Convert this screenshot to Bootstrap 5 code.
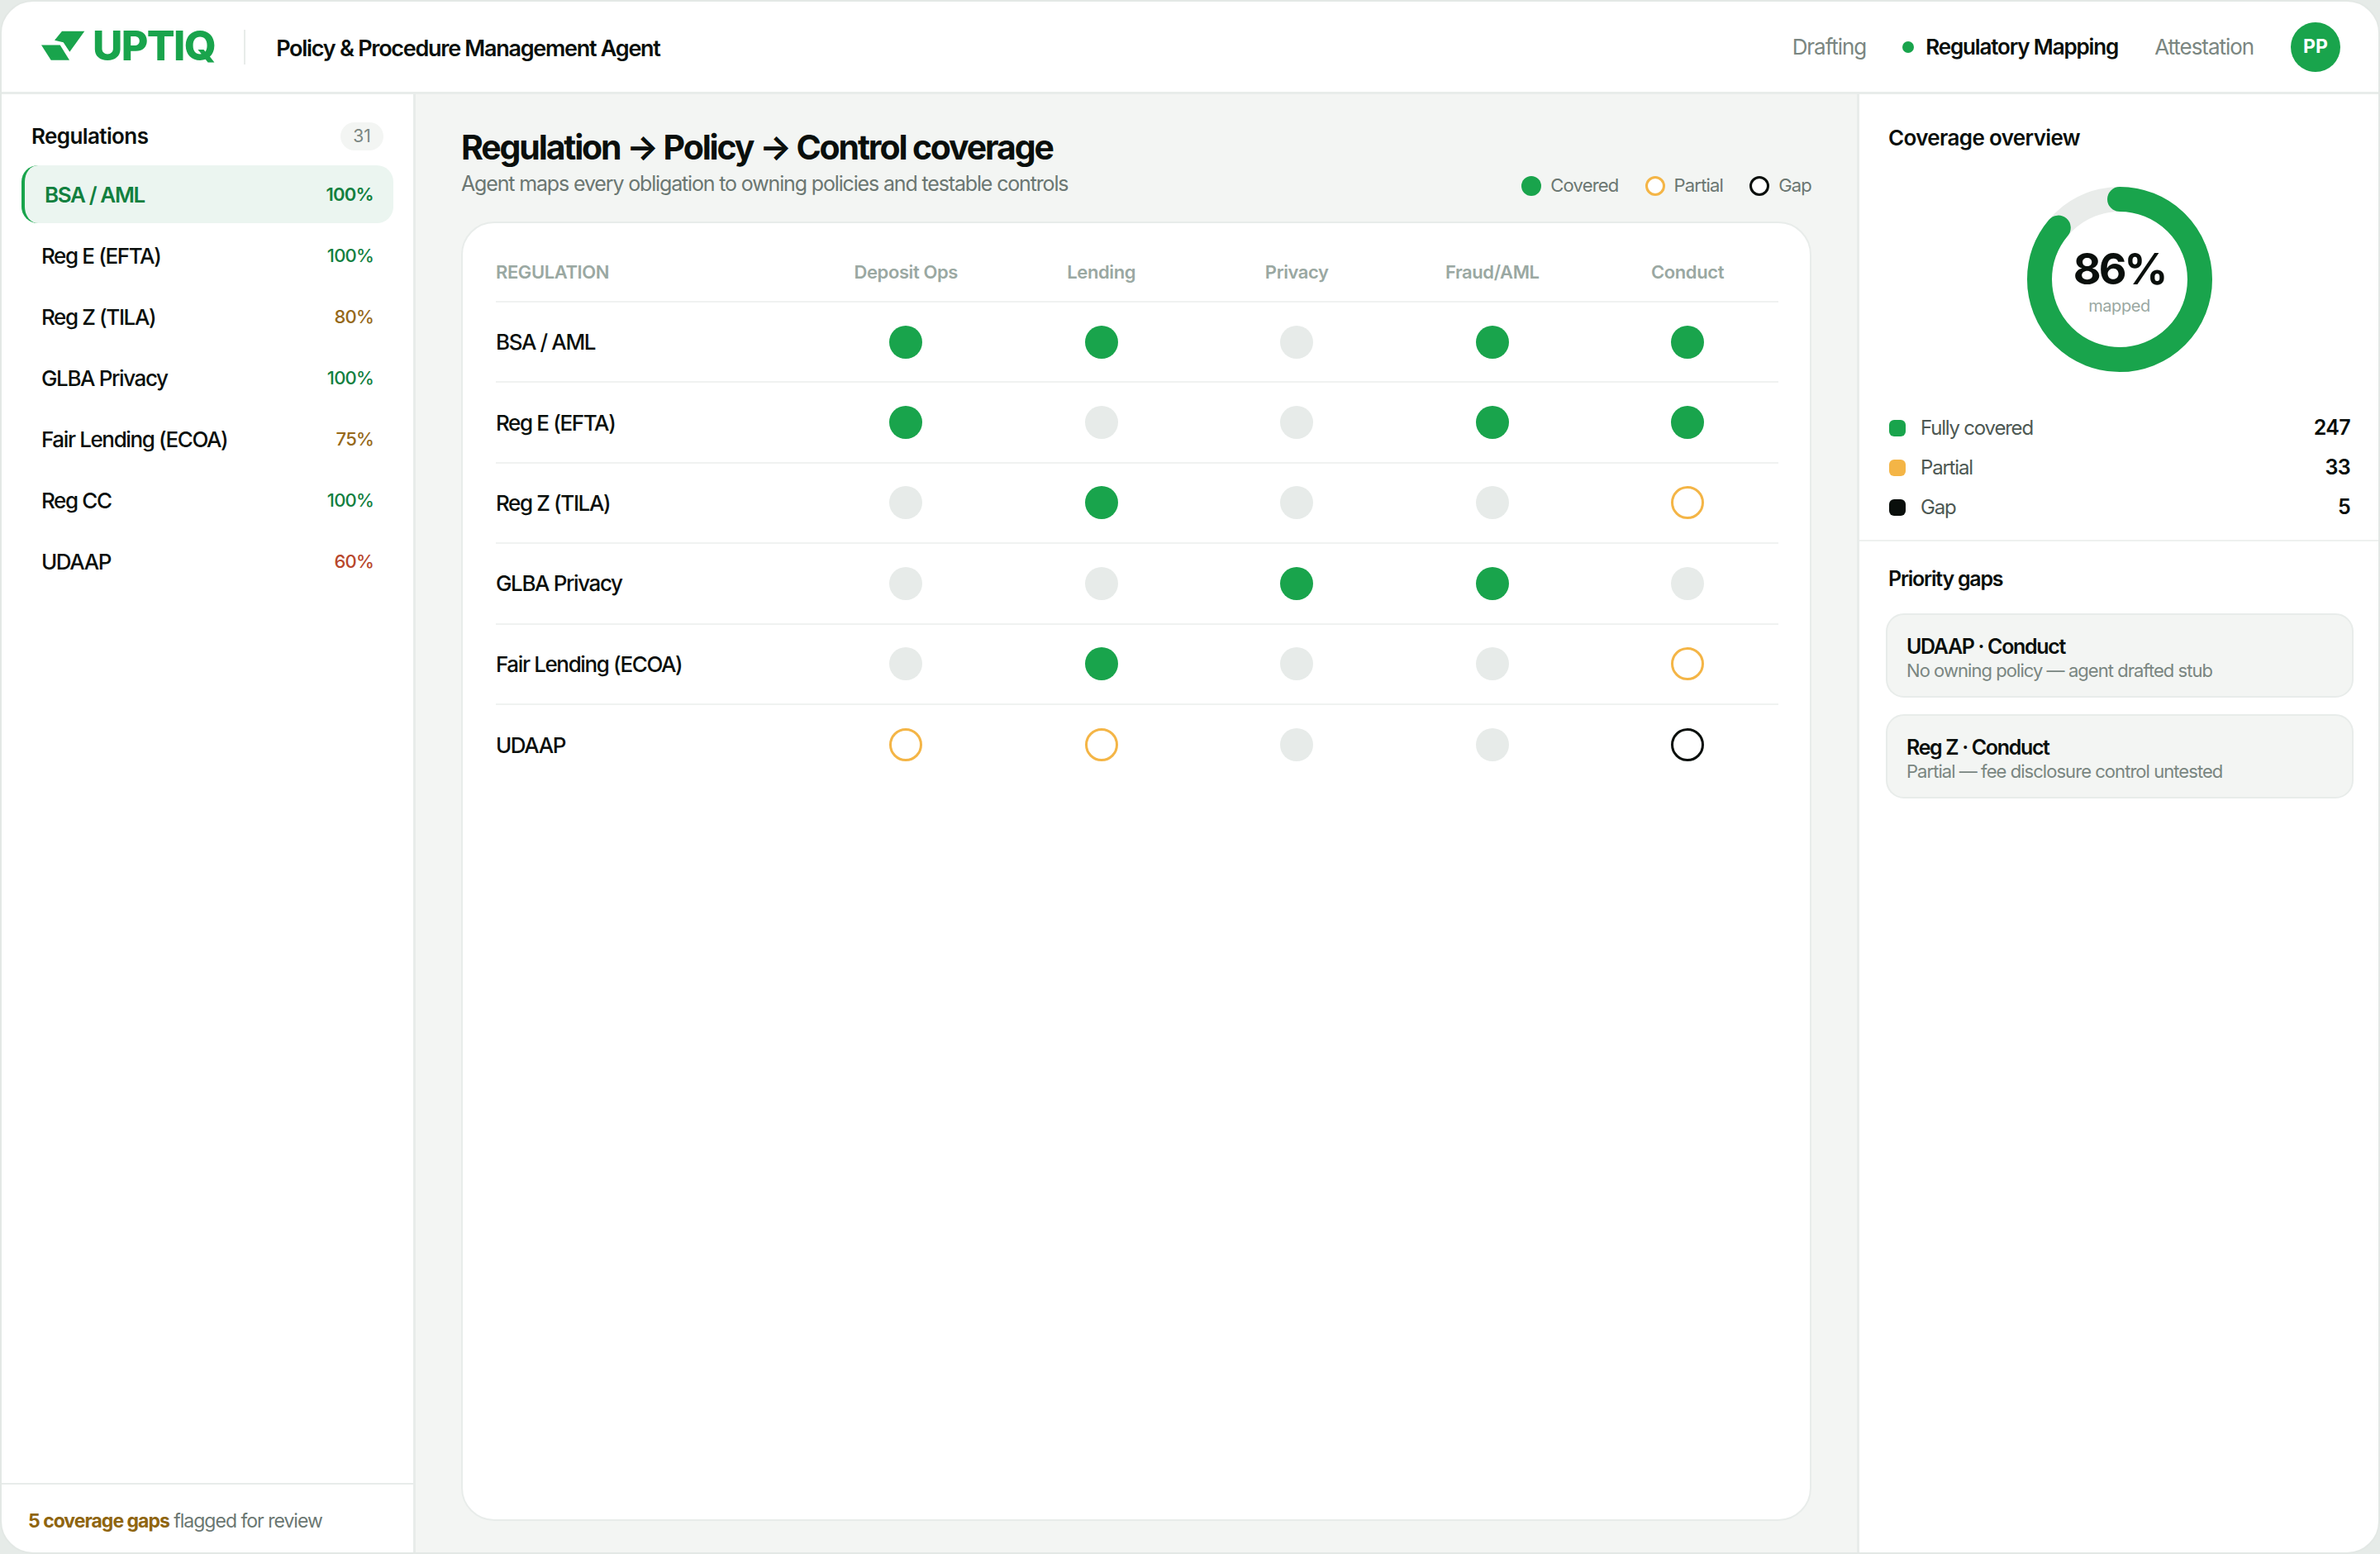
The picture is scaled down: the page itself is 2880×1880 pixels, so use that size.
<!DOCTYPE html>
<html lang="en">
<head>
    <meta charset="UTF-8">
    <meta name="viewport" content="width=device-width, initial-scale=1.0">
    <title>Policy &amp; Procedure Management Agent</title>
    <link href="https://cdn.jsdelivr.net/npm/bootstrap@5.3.0/dist/css/bootstrap.min.css" rel="stylesheet">
    <style>
        html, body { height: 100%; }
        body { margin: 0; background: #e6ebe8; font-family: Inter, "Liberation Sans", sans-serif; color: #0a0f0c; overflow: hidden; }
        .shell { height: 1880px; width: 2880px; background: #fff; border: 2px solid #e3e8e5; border-radius: 40px; overflow: hidden; }

        /* header */
        .topbar { flex: none; border-bottom: 3px solid #e8ecea; padding: 0 46px 0 48px; box-sizing: content-box; height: 109px; }
        .logo-mark { width: 60px; height: 40px; flex: none; margin-top: -2px; }
        .logo-word { font-size: 50px; font-weight: 800; color: #19a44c; letter-spacing: -1.6px; line-height: 1; margin-left: 2px; margin-top: -3px; }
        .logo-sep { width: 2px; height: 42px; background: #e8ecea; margin: 0 37px 0 35px; }
        .app-title { font-size: 27px; font-weight: 600; letter-spacing: -1.27px; margin-top: 6px; }
        .top-link { font-size: 26px; font-weight: 400; color: #7a8681; letter-spacing: -1.05px; }
        .top-link.is-active { color: #0a0f0c; font-weight: 600; letter-spacing: -1.15px; }
        .top-dot { width: 14px; height: 14px; border-radius: 50%; background: #19a44c; margin-right: 14px; }
        .avatar { width: 60px; height: 60px; border-radius: 50%; background: #19a44c; color: #fff; font-size: 23px; font-weight: 700; }

        /* sidebar */
        .sidebar { width: 501px; flex: none; border-right: 3px solid #e8ecea; }
        .side-head { padding: 31px 36px 16px 36px; }
        .side-title { font-size: 26px; font-weight: 600; letter-spacing: -0.6px; }
        .count-pill { background: #f3f5f3; color: #7a8681; font-size: 21px; border-radius: 17px; width: 52px; height: 34px; }
        .reg-list { padding: 0 24px; gap: 4px; }
        .reg-item { height: 70px; padding: 0 24px; border: 0; border-radius: 20px; font-size: 26px; font-weight: 500; letter-spacing: -1.38px; color: #0a0f0c; }
        .reg-item.is-active { background: #ebf5f0; border-left: 4px solid #19a44c; color: #12803f; font-weight: 600; }
        .pct { font-size: 22px; font-weight: 500; letter-spacing: -0.8px; }
        .is-active .pct { font-weight: 600; letter-spacing: -0.7px; }
        .pct-good { color: #12803f; }
        .pct-warn { color: #96691a; }
        .pct-bad { color: #b8472c; }
        .side-foot { border-top: 2px solid #e8ecea; padding: 27px 32px 0; height: 84px; font-size: 23px; letter-spacing: -1px; color: #6b7772; }
        .side-foot strong { color: #8f6510; font-weight: 700; }

        /* main */
        .main-pane { background: #f3f5f3; padding: 40px 55px 38px 55px; min-width: 0; }
        .page-title { font-size: 41px; font-weight: 700; letter-spacing: -2.15px; line-height: 1.2; margin: 0; }
        .page-sub { font-size: 25px; color: #6b7772; letter-spacing: -1.15px; line-height: 1.3; margin: 3px 0 0; }
        .head-row { height: 114px; flex: none; }
        .legend { font-size: 22px; color: #6b7772; letter-spacing: -0.8px; gap: 32px; padding-top: 54px; }
        .legend-dot { width: 24px; height: 24px; border-radius: 50%; margin-right: 11px; flex: none; }
        .grid-card { border: 2px solid #e8ecea; border-radius: 40px; background: #fff; padding: 0 38px 0 40px; }
        .cov-table { table-layout: fixed; width: 1552px; margin: 0; border-collapse: collapse; }
        .cov-table th, .cov-table td { padding: 0; background: transparent; border-bottom: 2px solid #f0f2f1; text-align: center; vertical-align: middle; }
        .cov-table thead th { height: 95px; padding-top: 24px; font-size: 22px; font-weight: 600; color: #9aa8a2; letter-spacing: -0.4px; }
        .cov-table tbody td { height: 97.4px; }
        .cov-table tr:last-child td { border-bottom: 0; }
        .cov-table .reg-cell { text-align: left; font-size: 26px; font-weight: 500; letter-spacing: -1.38px; color: #0a0f0c; }
        .cov-table .end-col { padding-left: 8px; }
        .cell-dot { display: block; width: 40px; height: 40px; border-radius: 50%; margin: 0 auto; }
        .st-on { background: #19a44c; }
        .st-none { background: #e7ebe9; }
        .st-part { background: #fff; border: 3px solid #f4b546; }
        .st-gap { background: #fff; border: 3px solid #0a0f0c; }

        /* right panel */
        .right-pane { width: 631px; flex: none; border-left: 3px solid #e8ecea; }
        .cov-top { padding: 0 34px 28px 35px; border-bottom: 2px solid #eef1ef; height: 541px; flex: none; }
        .panel-title { font-size: 26px; font-weight: 600; letter-spacing: -0.65px; margin: 0; padding-top: 36px; line-height: 34px; }
        .donut-box { width: 224px; height: 224px; margin: 42px auto 44px; }
        .donut-box svg { width: 224px; height: 224px; display: block; }
        .donut-text { position: absolute; inset: 3px 0 0; }
        .donut-num { font-size: 52px; font-weight: 700; letter-spacing: -3px; line-height: 1; }
        .donut-lbl { font-size: 20px; color: #9aa8a2; line-height: 1; margin-top: 8px; letter-spacing: -0.4px; }
        .stat-row { height: 48px; font-size: 24px; color: #4d5853; letter-spacing: -1.2px; }
        .stat-swatch { width: 20px; height: 20px; border-radius: 6px; margin: 0 18px 0 1px; flex: none; }
        .stat-val { margin-left: auto; font-size: 25px; font-weight: 600; color: #0a0f0c; letter-spacing: -0.7px; }
        .gaps-wrap { padding: 0 30px 0 32px; }
        .gaps-title { font-size: 25px; font-weight: 600; letter-spacing: -1.25px; margin: 29px 0 26px 3px; line-height: 32px; }
        .gap-box { background: #f3f5f3; border: 2px solid #e8ecea; border-radius: 22px; padding: 6px 23px 0; height: 102px; margin-bottom: 20px; }
        .gap-name { font-size: 25px; font-weight: 600; letter-spacing: -1.35px; line-height: 30px; }
        .gap-note { font-size: 22px; color: #7a8681; letter-spacing: -0.95px; line-height: 28px; }
    </style>
</head>
<body>
    <div class="shell d-flex flex-column">
        <!-- Top bar -->
        <header class="topbar d-flex align-items-center">
            <svg class="logo-mark" viewBox="0 0 60 40">
                <polygon fill="#19a44c" points="16,12.8 25,1.8 52.3,1.8 34.3,26.8 26.7,15.2"/>
                <polygon fill="#19a44c" points="0,18.5 22.7,18.5 34,36.8 11.7,36.8"/>
            </svg>
            <span class="logo-word">UPTIQ</span>
            <span class="logo-sep"></span>
            <span class="app-title">Policy &amp; Procedure Management Agent</span>
            <nav class="ms-auto d-flex align-items-center">
                <span class="top-link">Drafting</span>
                <span class="top-dot" style="margin-left:44px"></span>
                <span class="top-link is-active">Regulatory Mapping</span>
                <span class="top-link" style="margin-left:44px">Attestation</span>
                <span class="avatar d-flex align-items-center justify-content-center" style="margin-left:45px">PP</span>
            </nav>
        </header>

        <div class="d-flex flex-grow-1" style="min-height:0">
            <!-- Left list -->
            <aside class="sidebar d-flex flex-column">
                <div class="side-head d-flex align-items-center justify-content-between">
                    <span class="side-title">Regulations</span>
                    <span class="count-pill d-flex align-items-center justify-content-center">31</span>
                </div>
                <div class="reg-list d-flex flex-column flex-grow-1">
                    <div class="reg-item is-active d-flex align-items-center justify-content-between"><span>BSA / AML</span><span class="pct pct-good">100%</span></div>
                    <div class="reg-item d-flex align-items-center justify-content-between"><span>Reg E (EFTA)</span><span class="pct pct-good">100%</span></div>
                    <div class="reg-item d-flex align-items-center justify-content-between"><span>Reg Z (TILA)</span><span class="pct pct-warn">80%</span></div>
                    <div class="reg-item d-flex align-items-center justify-content-between"><span>GLBA Privacy</span><span class="pct pct-good">100%</span></div>
                    <div class="reg-item d-flex align-items-center justify-content-between"><span>Fair Lending (ECOA)</span><span class="pct pct-warn">75%</span></div>
                    <div class="reg-item d-flex align-items-center justify-content-between"><span>Reg CC</span><span class="pct pct-good">100%</span></div>
                    <div class="reg-item d-flex align-items-center justify-content-between"><span>UDAAP</span><span class="pct pct-bad">60%</span></div>
                </div>
                <div class="side-foot"><strong>5 coverage gaps</strong> flagged for review</div>
            </aside>

            <!-- Matrix -->
            <main class="main-pane d-flex flex-column flex-grow-1">
                <div class="head-row d-flex justify-content-between">
                    <div>
                        <h1 class="page-title">Regulation → Policy → Control coverage</h1>
                        <p class="page-sub">Agent maps every obligation to owning policies and testable controls</p>
                    </div>
                    <div class="legend d-flex align-items-start">
                        <span class="d-flex align-items-center"><span class="legend-dot st-on"></span>Covered</span>
                        <span class="d-flex align-items-center"><span class="legend-dot st-part"></span>Partial</span>
                        <span class="d-flex align-items-center"><span class="legend-dot st-gap"></span>Gap</span>
                    </div>
                </div>
                <div class="grid-card flex-grow-1">
                    <table class="table cov-table">
                        <colgroup>
                            <col style="width:378px"><col style="width:236.5px"><col style="width:236.5px"><col style="width:236.5px"><col style="width:236.5px"><col style="width:228px">
                        </colgroup>
                        <thead>
                            <tr>
                                <th class="reg-head text-start">REGULATION</th>
                                <th>Deposit Ops</th>
                                <th>Lending</th>
                                <th>Privacy</th>
                                <th>Fraud/AML</th>
                                <th class="end-col">Conduct</th>
                            </tr>
                        </thead>
                        <tbody>
                            <tr>
                                <td class="reg-cell">BSA / AML</td>
                                <td><span class="cell-dot st-on"></span></td>
                                <td><span class="cell-dot st-on"></span></td>
                                <td><span class="cell-dot st-none"></span></td>
                                <td><span class="cell-dot st-on"></span></td>
                                <td class="end-col"><span class="cell-dot st-on"></span></td>
                            </tr>
                            <tr>
                                <td class="reg-cell">Reg E (EFTA)</td>
                                <td><span class="cell-dot st-on"></span></td>
                                <td><span class="cell-dot st-none"></span></td>
                                <td><span class="cell-dot st-none"></span></td>
                                <td><span class="cell-dot st-on"></span></td>
                                <td class="end-col"><span class="cell-dot st-on"></span></td>
                            </tr>
                            <tr>
                                <td class="reg-cell">Reg Z (TILA)</td>
                                <td><span class="cell-dot st-none"></span></td>
                                <td><span class="cell-dot st-on"></span></td>
                                <td><span class="cell-dot st-none"></span></td>
                                <td><span class="cell-dot st-none"></span></td>
                                <td class="end-col"><span class="cell-dot st-part"></span></td>
                            </tr>
                            <tr>
                                <td class="reg-cell">GLBA Privacy</td>
                                <td><span class="cell-dot st-none"></span></td>
                                <td><span class="cell-dot st-none"></span></td>
                                <td><span class="cell-dot st-on"></span></td>
                                <td><span class="cell-dot st-on"></span></td>
                                <td class="end-col"><span class="cell-dot st-none"></span></td>
                            </tr>
                            <tr>
                                <td class="reg-cell">Fair Lending (ECOA)</td>
                                <td><span class="cell-dot st-none"></span></td>
                                <td><span class="cell-dot st-on"></span></td>
                                <td><span class="cell-dot st-none"></span></td>
                                <td><span class="cell-dot st-none"></span></td>
                                <td class="end-col"><span class="cell-dot st-part"></span></td>
                            </tr>
                            <tr>
                                <td class="reg-cell">UDAAP</td>
                                <td><span class="cell-dot st-part"></span></td>
                                <td><span class="cell-dot st-part"></span></td>
                                <td><span class="cell-dot st-none"></span></td>
                                <td><span class="cell-dot st-none"></span></td>
                                <td class="end-col"><span class="cell-dot st-gap"></span></td>
                            </tr>
                        </tbody>
                    </table>
                </div>
            </main>

            <!-- Overview -->
            <aside class="right-pane d-flex flex-column">
                <div class="cov-top">
                    <h2 class="panel-title">Coverage overview</h2>
                    <div class="donut-box position-relative">
                        <svg viewBox="0 0 224 224">
                            <circle cx="112" cy="112" r="97" fill="none" stroke="#e9ecea" stroke-width="30"/>
                            <circle cx="112" cy="112" r="97" fill="none" stroke="#19a44c" stroke-width="30" stroke-linecap="round" stroke-dasharray="524.1 609.5" transform="rotate(-90 112 112)"/>
                        </svg>
                        <div class="donut-text d-flex flex-column align-items-center justify-content-center">
                            <div class="donut-num">86%</div>
                            <div class="donut-lbl">mapped</div>
                        </div>
                    </div>
                    <div class="stat-row d-flex align-items-center"><span class="stat-swatch" style="background:#19a44c"></span>Fully covered<span class="stat-val">247</span></div>
                    <div class="stat-row d-flex align-items-center"><span class="stat-swatch" style="background:#f4b546"></span>Partial<span class="stat-val">33</span></div>
                    <div class="stat-row d-flex align-items-center"><span class="stat-swatch" style="background:#0a0f0c"></span>Gap<span class="stat-val">5</span></div>
                </div>
                <div class="gaps-wrap">
                    <h3 class="gaps-title">Priority gaps</h3>
                    <div class="gap-box d-flex flex-column justify-content-center">
                        <div class="gap-name">UDAAP · Conduct</div>
                        <div class="gap-note">No owning policy — agent drafted stub</div>
                    </div>
                    <div class="gap-box d-flex flex-column justify-content-center">
                        <div class="gap-name">Reg Z · Conduct</div>
                        <div class="gap-note">Partial — fee disclosure control untested</div>
                    </div>
                </div>
            </aside>
        </div>
    </div>
</body>
</html>
